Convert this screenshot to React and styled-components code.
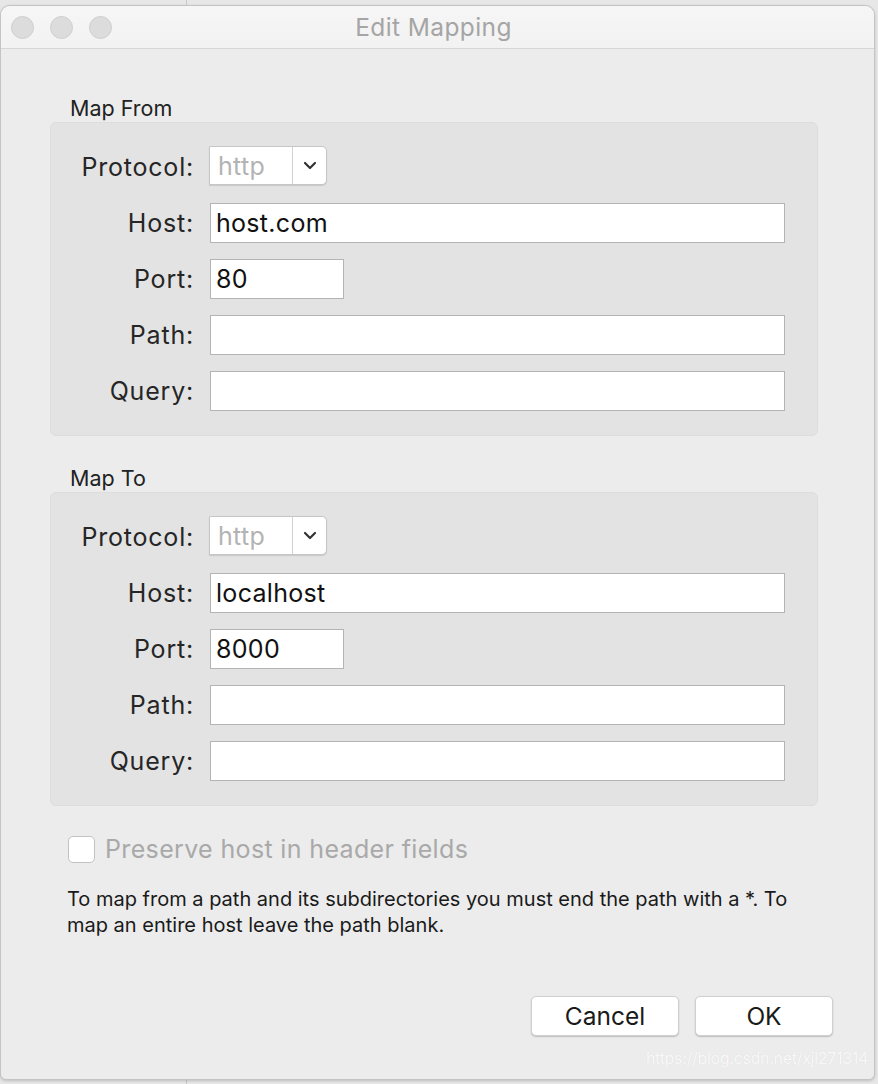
import React from 'react';
import styled, { createGlobalStyle } from 'styled-components';

const GlobalStyle = createGlobalStyle`
  html, body {
    margin: 0;
    padding: 0;
  }
  body {
    font-family: Inter, "Noto Sans", "Liberation Sans", sans-serif;
    -webkit-font-smoothing: antialiased;
  }
`;

const Desktop = styled.div`
  width: 878px;
  height: 1084px;
  box-sizing: border-box;
  padding: 5px 3px 4px 0;
  background: linear-gradient(
    to right,
    #e7e7e7 186px,
    #c9c9c9 186px,
    #c9c9c9 187px,
    #e7e7e7 187px
  );
  overflow: hidden;
`;

const Window = styled.div`
  position: relative;
  height: 100%;
  box-sizing: border-box;
  display: flex;
  flex-direction: column;
  background: #ececec;
  border: 1px solid #c4c4c4;
  border-radius: 10px 10px 6px 6px;
  box-shadow: 0 1px 3px rgba(0, 0, 0, 0.18);
  overflow: hidden;
`;

const TitleBar = styled.div`
  position: relative;
  height: 42px;
  flex: none;
  display: flex;
  align-items: center;
  justify-content: center;
  padding-right: 8px;
  background: linear-gradient(#f6f6f6, #f2f2f2);
  border-bottom: 1px solid #d6d6d6;
`;

const Lights = styled.div`
  position: absolute;
  left: 10px;
  top: 10px;
  display: flex;
  gap: 16px;
`;

const Light = styled.span`
  width: 23px;
  height: 23px;
  border-radius: 50%;
  background: #dcdcdc;
  border: 1px solid #cfcfcf;
  box-sizing: border-box;
`;

const Title = styled.div`
  font-size: 24.5px;
  color: #a5a5a5;
  letter-spacing: 0.4px;
`;

const Content = styled.div`
  flex: 1;
  display: flex;
  flex-direction: column;
  padding: 46px 41px 0 49px;
`;

const SectionTitle = styled.div`
  font-size: 21.5px;
  line-height: 26px;
  color: #222;
  margin: 0 0 1px 20px;
`;

const Box = styled.div`
  margin-right: 15px;
  margin-bottom: ${p => p.$gap || 0}px;
  background: #e3e3e3;
  border: 1px solid #dddddd;
  border-radius: 6px;
  padding: 23px 32px 24px 0;
  display: grid;
  grid-template-columns: 143px 1fr;
  column-gap: 16px;
  row-gap: 16px;
  align-items: center;
`;

const Label = styled.label`
  text-align: right;
  font-size: 25px;
  color: #262626;
  letter-spacing: 0.8px;
`;

const Field = styled.div`
  height: 40px;
  width: ${p => p.$width ? `${p.$width}px` : 'auto'};
  box-sizing: border-box;
  background: #fff;
  border: 1px solid #b4b4b4;
  display: flex;
  align-items: center;
  padding-left: 5px;
  font-size: 25px;
  color: #111;
  letter-spacing: 0.3px;
`;

const Select = styled.div`
  align-self: start;
  width: 118px;
  height: 39px;
  box-sizing: border-box;
  display: flex;
  background: #fff;
  border: 1px solid #c6c6c6;
  border-radius: 0 5px 5px 0;
  box-shadow: 0 1px 1px rgba(0, 0, 0, 0.12);
  margin: 0 0 2px -1px;
`;

const SelectValue = styled.span`
  flex: 1;
  display: flex;
  align-items: center;
  padding-left: 8px;
  font-size: 25px;
  color: #b3b3b3;
  letter-spacing: 0.3px;
  border-right: 1px solid #d2d2d2;
`;

const SelectArrow = styled.span`
  width: 33px;
  display: flex;
  align-items: center;
  justify-content: center;
`;

const CheckRow = styled.div`
  display: flex;
  align-items: center;
  gap: 10px;
  margin: 0 0 22px 18px;
`;

const CheckBox = styled.span`
  width: 27px;
  height: 27px;
  box-sizing: border-box;
  background: #fff;
  border: 1px solid #c2c2c2;
  border-radius: 5px;
`;

const CheckLabel = styled.span`
  font-size: 25px;
  color: #a9a9a9;
  letter-spacing: 0.35px;
`;

const Help = styled.p`
  margin: 0 0 0 17px;
  font-size: 20px;
  line-height: 26px;
  color: #1a1a1a;
  max-width: 748px;
`;

const Footer = styled.div`
  margin-top: 58px;
  display: flex;
  justify-content: flex-end;
  gap: 16px;
`;

const Button = styled.button`
  width: ${p => p.$width}px;
  height: 40px;
  background: #fff;
  border: 1px solid #cfcfcf;
  border-radius: 5px;
  box-shadow: 0 1px 1.5px rgba(0, 0, 0, 0.2);
  font-family: inherit;
  font-size: 24.5px;
  color: #1a1a1a;
  padding: 0;
`;

const Watermark = styled.div`
  position: absolute;
  right: 6px;
  bottom: 11px;
  font-size: 16px;
  color: #f8f8f8;
  text-shadow: 0 0 1px rgba(0, 0, 0, 0.08);
  letter-spacing: -0.3px;
`;

const Chevron = () => (
  <svg width="14" height="9" viewBox="0 0 14 9">
    <path d="M2 2 L7 7 L12 2" fill="none" stroke="#333" strokeWidth="2.2" strokeLinecap="round" strokeLinejoin="round" />
  </svg>
);

const MappingBox = ({ host, port, gap }) => (
  <Box $gap={gap}>
    <Label>Protocol:</Label>
    <Select>
      <SelectValue>http</SelectValue>
      <SelectArrow><Chevron /></SelectArrow>
    </Select>
    <Label>Host:</Label>
    <Field>{host}</Field>
    <Label>Port:</Label>
    <Field $width={134}>{port}</Field>
    <Label>Path:</Label>
    <Field />
    <Label>Query:</Label>
    <Field />
  </Box>
);

export default function App() {
  return (
    <Desktop>
      <GlobalStyle />
      <Window>
        <TitleBar>
          <Lights>
            <Light />
            <Light />
            <Light />
          </Lights>
          <Title>Edit Mapping</Title>
        </TitleBar>
        <Content>
          <SectionTitle>Map From</SectionTitle>
          <MappingBox host="host.com" port="80" gap={29} />
          <SectionTitle>Map To</SectionTitle>
          <MappingBox host="localhost" port="8000" gap={28} />
          <CheckRow>
            <CheckBox />
            <CheckLabel>Preserve host in header fields</CheckLabel>
          </CheckRow>
          <Help>
            To map from a path and its subdirectories you must end the path with a *. To
            map an entire host leave the path blank.
          </Help>
          <Footer>
            <Button $width={148}>Cancel</Button>
            <Button $width={138}>OK</Button>
          </Footer>
        </Content>
        <Watermark>https://blog.csdn.net/xjl271314</Watermark>
      </Window>
    </Desktop>
  );
}
